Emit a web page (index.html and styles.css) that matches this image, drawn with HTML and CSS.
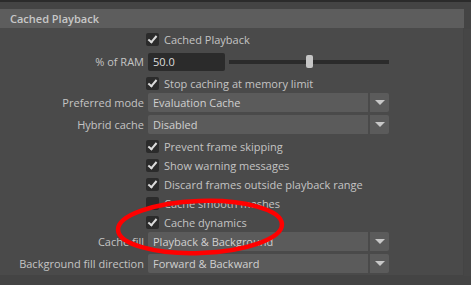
FILE: index.html
```html
<!DOCTYPE html>
<html>
<head>
    <title>Cached Playback</title>
    <link rel="stylesheet" href="styles.css">
</head>
<body>
    <div class="topbar"></div>
    <div class="frame">
        <div class="panel">
            <div class="panel-header">Cached Playback</div>
            <div class="panel-body">
                <div class="row cb-row">
                    <span class="label"></span>
                    <label class="check"><span class="box on"></span>Cached Playback</label>
                </div>
                <div class="row ram-row">
                    <span class="label">% of RAM</span>
                    <div class="ram">
                        <div class="field">50.0</div>
                        <div class="slider"><div class="track"></div><div class="handle"></div></div>
                    </div>
                </div>
                <div class="row cb-row">
                    <span class="label"></span>
                    <label class="check"><span class="box on"></span>Stop caching at memory limit</label>
                </div>
                <div class="row dd-row">
                    <span class="label">Preferred mode</span>
                    <div class="dropdown"><div class="dd-value">Evaluation Cache</div><div class="dd-arrow"></div></div>
                </div>
                <div class="row dd-row">
                    <span class="label">Hybrid cache</span>
                    <div class="dropdown"><div class="dd-value">Disabled</div><div class="dd-arrow"></div></div>
                </div>
                <div class="row cb-row">
                    <span class="label"></span>
                    <label class="check"><span class="box on"></span>Prevent frame skipping</label>
                </div>
                <div class="row cb-row">
                    <span class="label"></span>
                    <label class="check"><span class="box on"></span>Show warning messages</label>
                </div>
                <div class="row cb-row">
                    <span class="label"></span>
                    <label class="check"><span class="box on"></span>Discard frames outside playback range</label>
                </div>
                <div class="row cb-row">
                    <span class="label"></span>
                    <label class="check"><span class="box"></span>Cache smooth meshes</label>
                </div>
                <div class="row cb-row">
                    <span class="label"></span>
                    <label class="check"><span class="box on"></span>Cache dynamics</label>
                </div>
                <div class="row dd-row">
                    <span class="label">Cache fill</span>
                    <div class="dropdown"><div class="dd-value">Playback &amp; Background</div><div class="dd-arrow"></div></div>
                </div>
                <div class="row dd-row">
                    <span class="label">Background fill direction</span>
                    <div class="dropdown"><div class="dd-value">Forward &amp; Backward</div><div class="dd-arrow"></div></div>
                </div>
            </div>
        </div>
        <div class="side"></div>
    </div>

    <svg class="mark" width="471" height="285" viewBox="0 0 471 285">
        <ellipse cx="200" cy="227" rx="82" ry="26" fill="none" stroke="#ff0000" stroke-width="4.5" transform="rotate(-2 200 227)"/>
    </svg>
</body>
</html>
```

FILE: styles.css
```css
body {
    margin: 0;
    padding: 0;
    width: 471px;
    height: 285px;
    overflow: hidden;
    background-color: #444444;
    font-family: "Open Sans", "Liberation Sans", sans-serif;
    font-size: 11px;
    color: #c4c4c4;
    position: relative;
}

.topbar {
    height: 2px;
    background-color: #2b2b2b;
}

.frame {
    display: flex;
    padding-top: 7px;
}

.panel {
    width: 464px;
}

.panel-header {
    height: 19px;
    line-height: 19px;
    background-color: #5d5d5d;
    padding-left: 10px;
    font-size: 11px;
    font-weight: 600;
    color: #c8c8c8;
}

.panel-body {
    width: 463px;
    height: 247px;
    padding-top: 2px;
    box-sizing: border-box;
    background-color: #4a4a4a;
}

.side {
    flex: 1;
    margin-top: 20px;
    height: 247px;
    background-color: #464646;
}

.row {
    display: grid;
    grid-template-columns: 146px 1fr;
    align-items: center;
    height: 19px;
}

.ram-row {
    height: 25px;
}

.dd-row {
    height: 22px;
    align-items: start;
}

.dd-row .label {
    line-height: 19px;
}

.label {
    text-align: right;
    padding-right: 2px;
    white-space: nowrap;
}

.check {
    display: flex;
    align-items: center;
    gap: 5px;
}

.box {
    width: 13px;
    height: 13px;
    border-radius: 2px;
    background-color: #2b2b2b;
    position: relative;
}

.box.on::after {
    content: "";
    position: absolute;
    left: 4px;
    top: 1px;
    width: 3px;
    height: 7px;
    border-right: 2px solid #dcdcdc;
    border-bottom: 2px solid #dcdcdc;
    transform: rotate(40deg);
}

.ram {
    display: flex;
    align-items: center;
    margin-left: 2px;
}

.field {
    width: 72px;
    height: 18px;
    line-height: 18px;
    padding-left: 5px;
    border-radius: 2px;
    background-color: #2b2b2b;
    color: #dddddd;
}

.slider {
    position: relative;
    width: 160px;
    height: 14px;
    margin-left: 4px;
}

.track {
    position: absolute;
    left: 0;
    right: 0;
    top: 5px;
    height: 4px;
    background-color: #2b2b2b;
}

.handle {
    position: absolute;
    left: 77px;
    top: 0;
    width: 7px;
    height: 13px;
    border-radius: 2px;
    background-color: #c5c5c5;
}

.dropdown {
    display: flex;
    gap: 2px;
    margin-left: 2px;
    width: 241px;
    height: 19px;
}

.dd-value {
    flex: 1;
    line-height: 19px;
    padding-left: 5px;
    border-radius: 2px 0 0 2px;
    background-color: #5b5b5b;
    color: #d0d0d0;
}

.dd-arrow {
    width: 19px;
    border-radius: 0 2px 2px 0;
    background-color: #5b5b5b;
    position: relative;
}

.dd-arrow::after {
    content: "";
    position: absolute;
    left: 5px;
    top: 7px;
    border-left: 5px solid transparent;
    border-right: 5px solid transparent;
    border-top: 5px solid #c8c8c8;
}

.mark {
    position: absolute;
    left: 0;
    top: 0;
}
```
